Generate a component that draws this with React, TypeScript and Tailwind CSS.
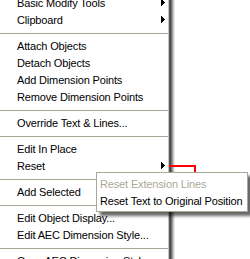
import React from "react";

type Item = { t?: string; arrow?: boolean; sep?: boolean };

const items: Item[] = [
  { t: "Basic Modify Tools", arrow: true },
  { t: "Clipboard", arrow: true },
  { sep: true },
  { t: "Attach Objects" },
  { t: "Detach Objects" },
  { t: "Add Dimension Points" },
  { t: "Remove Dimension Points" },
  { sep: true },
  { t: "Override Text & Lines..." },
  { sep: true },
  { t: "Edit In Place" },
  { t: "Reset", arrow: true },
  { sep: true },
  { t: "Add Selected" },
  { sep: true },
  { t: "Edit Object Display..." },
  { t: "Edit AEC Dimension Style..." },
  { sep: true },
  { t: "Copy AEC Dimension Style..." },
];

function Arrow() {
  return (
    <svg width="4" height="7" viewBox="0 0 4 7" shapeRendering="crispEdges" className="block">
      <polygon
        fill="#000"
        points="0,0 1,0 1,1 2,1 2,2 3,2 3,3 4,3 4,4 3,4 3,5 2,5 2,6 1,6 1,7 0,7"
      />
    </svg>
  );
}

export default function App() {
  return (
    <div className="relative w-[250px] h-[259px] overflow-hidden bg-white font-['Liberation_Sans',Arial,sans-serif] text-[11px] tracking-[-0.15px] text-black">
      <div className="flex mt-[-6px]">
        <div className="w-[168px] bg-white flex flex-col">
          {items.map((it, i) =>
            it.sep ? (
              <div key={i} className="h-[9px] pt-[5px]">
                <div className="h-px w-full bg-[#aca899]" />
              </div>
            ) : (
              <div key={i} className="h-[17px] flex items-center justify-between pl-[17px] pr-[3px] whitespace-nowrap">
                <span className="inline-block pt-[2px] leading-[13px]">{it.t}</span>
                {it.arrow ? <Arrow /> : null}
              </div>
            )
          )}
        </div>
        <div className="flex self-stretch">
          <div className="w-px bg-[#c4c4c4]" />
          <div className="w-px bg-[#5a5a5a]" />
          <div className="w-px bg-[#4a4a4a]" />
          <div className="w-px bg-[#707070]" />
          <div className="w-px bg-[#9c9c9c]" />
          <div className="w-px bg-[#c8c8c8]" />
          <div className="w-px bg-[#ececec]" />
        </div>
      </div>

      <svg
        className="absolute left-[169px] top-[165px]"
        width="28"
        height="9"
        viewBox="0 0 28 9"
        shapeRendering="crispEdges"
      >
        <rect x="0" y="0" width="27" height="2" fill="#ff0000" />
        <rect x="25" y="0" width="2" height="9" fill="#ff0000" />
      </svg>

      <div className="absolute left-[96px] top-[172px] w-[152px] border border-[#aca899] bg-white py-[2px] shadow-[4px_4px_3px_rgba(0,0,0,0.6)]">
        <div className="h-[17px] flex items-center pl-[3px] whitespace-nowrap text-[#aca899]">
          <span className="inline-block pt-[2px] leading-[13px]">Reset Extension Lines</span>
        </div>
        <div className="h-[17px] flex items-center pl-[3px] whitespace-nowrap">
          <span className="inline-block pt-[2px] leading-[13px]">Reset Text to Original Position</span>
        </div>
      </div>
    </div>
  );
}
